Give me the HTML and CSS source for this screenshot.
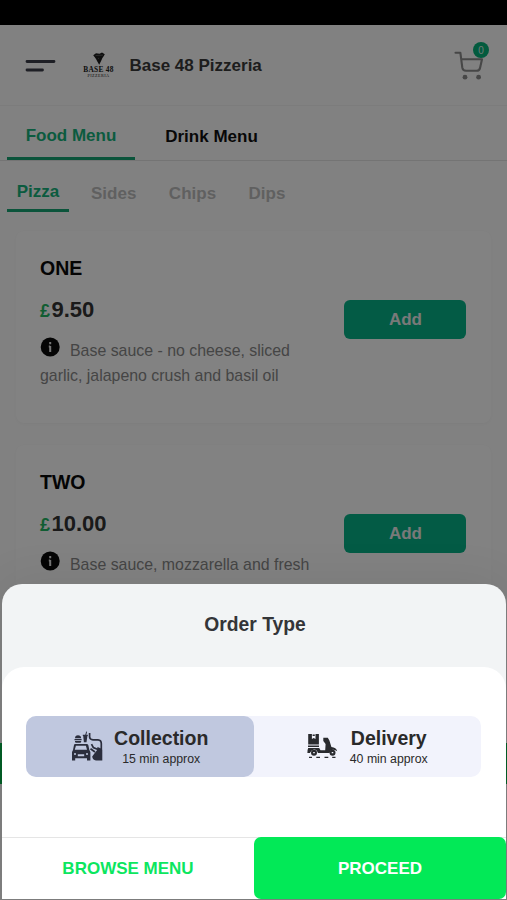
FILE: index.html
```html
<!DOCTYPE html>
<html lang="en">
<head>
<meta charset="utf-8">
<title>Base 48 Pizzeria</title>
<link rel="stylesheet" href="styles.css">
</head>
<body>
<div class="status-bar"></div>
<header class="header">
  <svg class="burger" width="31" height="14" viewBox="0 0 31 14"><path d="M2 2.5H29M2 11H17.5" fill="none" stroke="#3c3d49" stroke-width="2.8" stroke-linecap="round"/></svg>
  <div class="logo">
    <svg width="14" height="13" viewBox="0 0 14 13"><path d="M1.2 3.2 4 1.2 7.5 1.8 10 .5 12.8 2.2 11.8 4 10.4 6 9.2 8.8 7.2 12.7 5.6 10 4 7 2.6 5Z" fill="#1c1c1c"/><path d="M3.5 3.6 11 3.1M6 6l1 .8" stroke="#888" stroke-width=".5"/></svg>
    <span class="logo-name">BASE 48</span>
    <span class="logo-sub">PIZZERIA</span>
  </div>
  <h1 class="title">Base 48 Pizzeria</h1>
  <div class="cart">
    <svg width="32" height="32" viewBox="0 0 32 32"><path d="M1.5 2.8H6.4L8.3 17.7Q8.8 20.8 12 20.8H22.5Q25.5 20.8 26.1 17.7L28 9.2H7.4" fill="none" stroke="#8b8b8b" stroke-width="2.1" stroke-linecap="round" stroke-linejoin="round"/><circle cx="11" cy="27.2" r="2.4" fill="#8b8b8b"/><circle cx="24.6" cy="27.2" r="2.4" fill="#8b8b8b"/></svg>
    <span class="badge">0</span>
  </div>
</header>
<nav class="menus">
  <a class="menu active">Food Menu</a>
  <a class="menu">Drink Menu</a>
</nav>
<nav class="categories">
  <a class="category active">Pizza</a>
  <a class="category">Sides</a>
  <a class="category">Chips</a>
  <a class="category">Dips</a>
</nav>
<main class="items">
  <article class="item">
    <div class="details">
      <h2 class="name">ONE</h2>
      <p class="price"><span class="currency">£</span>9.50</p>
      <p class="description"><svg class="info" width="20" height="20" viewBox="0 0 20 20"><circle cx="10.2" cy="10" r="9.5" fill="#0b0b0b"/><path d="M10.2 5V7.2M10.2 9V15M8.8 9.6H10.2" stroke="#e8e8e8" stroke-width="2"/></svg>Base sauce - no cheese, sliced<br>garlic, jalapeno crush and basil oil</p>
    </div>
    <button class="add">Add</button>
  </article>
  <article class="item">
    <div class="details">
      <h2 class="name">TWO</h2>
      <p class="price"><span class="currency">£</span>10.00</p>
      <p class="description"><svg class="info" width="20" height="20" viewBox="0 0 20 20"><circle cx="10.2" cy="10" r="9.5" fill="#0b0b0b"/><path d="M10.2 5V7.2M10.2 9V15M8.8 9.6H10.2" stroke="#e8e8e8" stroke-width="2"/></svg>Base sauce, mozzarella and fresh</p>
    </div>
    <button class="add">Add</button>
  </article>
</main>
<div class="basket-bar"></div>
<div class="overlay"></div>
<section class="sheet">
  <h2 class="sheet-title">Order Type</h2>
  <div class="sheet-body">
    <div class="types">
      <div class="type selected">
        <svg class="type-icon" width="32" height="32" viewBox="0 0 32 32">
          <g fill="#2b2e3d"><path d="M4 8.2Q4 5.3 7 5.3T10.2 8.2ZM3.5 9.1H10.6V10.3H3.5ZM4 11.1H10.2V11.7Q10.2 12.7 9 12.7H5.2Q4 12.7 4 11.7ZM11.8 4.8H16.8V6.1H16.4L15.5 12.3H12.9L12.2 6.1H11.8Z"/><path d="M14.2 5 15.2 1.5 16.1 1.8 15.2 5Z"/><path d="M4 14H15.7Q16.9 14 17.3 15L18.4 20 19.4 22V30.5H16V28.2H4.2V30.5H1V22L2 20 3 15Q3.3 14 4 14Z"/><path d="M26.5 17Q30.3 18 31.3 20V30.5H25Q21.5 30 21.2 26.5L23.2 23.7 25.8 20.5Z"/></g>
          <path d="M4.9 15.8H14.9L16 19.8H3.8ZM6.8 24.3H13.2V26.2H6.8Z" fill="#c0c8df"/><circle cx="4" cy="24" r="1" fill="#c0c8df"/><circle cx="16" cy="24" r="1" fill="#c0c8df"/>
          <path d="M18.6 3V7Q18.8 9.6 22 9.8H27Q30.3 10.1 30.3 13.6V20M20.5 14.2 22.3 17.5 27 19.5M19.5 18.8 24 22" fill="none" stroke="#2b2e3d" stroke-width="1.7"/>
        </svg>
        <div class="type-text"><b class="type-name">Collection</b><span class="type-time">15 min approx</span></div>
      </div>
      <div class="type">
        <svg class="type-icon delivery" width="31" height="26" viewBox="0 0 31 26">
          <g fill="#292a2e"><path d="M1.2 1H4.9V6L6.7 5 8.5 6V1H11.9V11.5H1.2ZM1 12.4H12V14H1ZM1.2 15H12.2L13.5 17.3H18.2L18.6 11 16.3 8V4.8H20.8L22.4 7.5 24.4 14Q29.2 14.5 30.2 18.2L27.8 17Q24 15.5 22.5 20H11Q9 15 5 17.2L2.8 20H.4Q.2 17 1.2 15Z"/><circle cx="7" cy="19.7" r="3"/><circle cx="25.5" cy="19.7" r="3"/></g>
          <path d="M5.6 2.2H7.8" stroke="#292a2e" stroke-width="1.5"/><path d="M6.2 19.7H7.8M24.7 19.7H26.3" stroke="#f2f3fc" stroke-width="1.3"/>
          <path d="M2 24.4H5M9.3 24.4H13M17.5 24.4H21.3M25.2 24.4H28.5" stroke="#292a2e" stroke-width="1.2"/>
        </svg>
        <div class="type-text"><b class="type-name">Delivery</b><span class="type-time">40 min approx</span></div>
      </div>
    </div>
  </div>
  <footer class="actions">
    <button class="action browse">BROWSE MENU</button>
    <button class="action proceed">PROCEED</button>
  </footer>
</section>
</body>
</html>
```
FILE: styles.css
```css
* { box-sizing: border-box; }
body {
  margin: 0;
  position: relative;
  height: 900px;
  overflow: hidden;
  background: #fdfdfd;
  font-family: "Liberation Sans", Arial, sans-serif;
  color: #2a2a2a;
}
h1, h2, p { margin: 0; }
button { border: 0; padding: 0; font: bold 17px "Liberation Sans", Arial, sans-serif; }
.status-bar { height: 25px; background: #000; }
.header {
  height: 81px;
  display: flex;
  align-items: center;
  padding: 1px 17px 0 25px;
  border-bottom: 1px solid #f4f4f4;
}
.burger { margin-right: 26px; }
.logo { width: 33px; display: flex; flex-direction: column; align-items: center; color: #202020; font-family: "Liberation Serif", serif; white-space: nowrap; }
.logo svg { margin-top: -1px; }
.logo-name { margin-top: 1px; font-size: 7.4px; line-height: 7px; font-weight: bold; letter-spacing: .3px; }
.logo-sub { font-size: 4.2px; line-height: 5px; letter-spacing: .4px; }
.title { margin-left: 14.5px; font-size: 17px; line-height: 20px; color: #3a3a3a; }
.cart { position: relative; margin-left: auto; width: 36px; height: 32px; }
.badge {
  position: absolute;
  left: 19px;
  top: -8px;
  width: 16px;
  height: 16px;
  border-radius: 50%;
  background: #06b27a;
  color: #d9eee6;
  font-size: 10px;
  line-height: 17px;
  text-align: center;
}
.menus {
  height: 55px;
  display: flex;
  padding-left: 7px;
  border-bottom: 1px solid #e3e3e3;
  font-size: 17px;
  font-weight: bold;
  color: #111;
}
.menu { width: 128px; padding-top: 21px; line-height: 20px; text-align: center; }
.menu:last-child { margin-left: 12.5px; }
.active { color: #16b27c; border-bottom: 3px solid #16a574; }
.menu.active { padding-top: 20px; }
.categories {
  height: 51px;
  display: flex;
  padding-left: 7px;
  font-size: 17px;
  font-weight: bold;
  line-height: 20px;
  color: #bdbdbd;
}
.category { padding-top: 23px; }
.category.active { width: 62px; padding-top: 21px; text-align: center; margin-right: 22px; }
.category + .category + .category { margin-left: 32.5px; }
.items { display: flex; flex-direction: column; gap: 22px; padding: 19px 16px 0; }
.item {
  display: flex;
  justify-content: space-between;
  align-items: center;
  height: 192px;
  padding: 0 24px;
  border-radius: 8px;
  background: #fff;
  box-shadow: 0 1px 3px rgba(0, 0, 0, .03);
}
.details { align-self: flex-start; padding-top: 25px; white-space: nowrap; }
.name { font-size: 19.5px; line-height: 24px; color: #080808; }
.price { margin-top: 17px; font-size: 22px; line-height: 26px; font-weight: bold; color: #333; }
.currency { margin-right: 1.5px; font-size: 18px; color: #22b762; }
.description { margin-top: 13px; font-size: 15.9px; line-height: 25px; color: #888; }
.info { margin-right: 10px; vertical-align: -1px; }
.add { width: 122px; height: 39px; margin: -15px .6px 0 0; border-radius: 6px; background: #06b387; color: #eee; }
.basket-bar { position: absolute; left: 0; top: 743px; width: 507px; height: 41px; background: #05b94c; }
.overlay { position: absolute; inset: 0; background: rgba(0, 0, 0, .49); }
.sheet {
  position: absolute;
  left: 2px;
  top: 584px;
  width: 504px;
  height: 315px;
  display: flex;
  flex-direction: column;
  overflow: hidden;
  border-radius: 20px 20px 0 0;
  background: #f2f4f5;
  box-shadow: 0 0 50px rgba(0, 0, 0, .08);
}
.sheet-title { height: 83px; font-size: 19.3px; line-height: 82px; text-align: center; padding-left: 2px; color: #343538; }
.sheet-body { height: 170px; padding: 48.5px 25px 0 24px; border-radius: 22px 22px 0 0; background: #fff; }
.types { display: flex; height: 61px; border-radius: 10px; background: #f2f3fc; }
.type { width: 228px; display: flex; align-items: center; justify-content: center; }
.type.selected { border-radius: 10px; background: #c0c8df; }
.type-icon { margin-right: 11px; }
.type-icon.delivery { margin-right: 12px; }
.type-text { display: flex; flex-direction: column; align-items: center; padding-top: 3px; }
.type-name { font-size: 19.5px; line-height: 22px; }
.type-time { font-size: 12.3px; line-height: 20px; }
.actions { display: flex; flex: 1; border-top: 1px solid #e5e5e5; background: #fff; }
.action { width: 252px; height: 61px; }
.browse { background: #fff; color: #0ce65f; }
.proceed { margin-top: -1px; padding-top: 1px; height: 62px; border-radius: 7px; background: #02e957; color: #fff; }
```
